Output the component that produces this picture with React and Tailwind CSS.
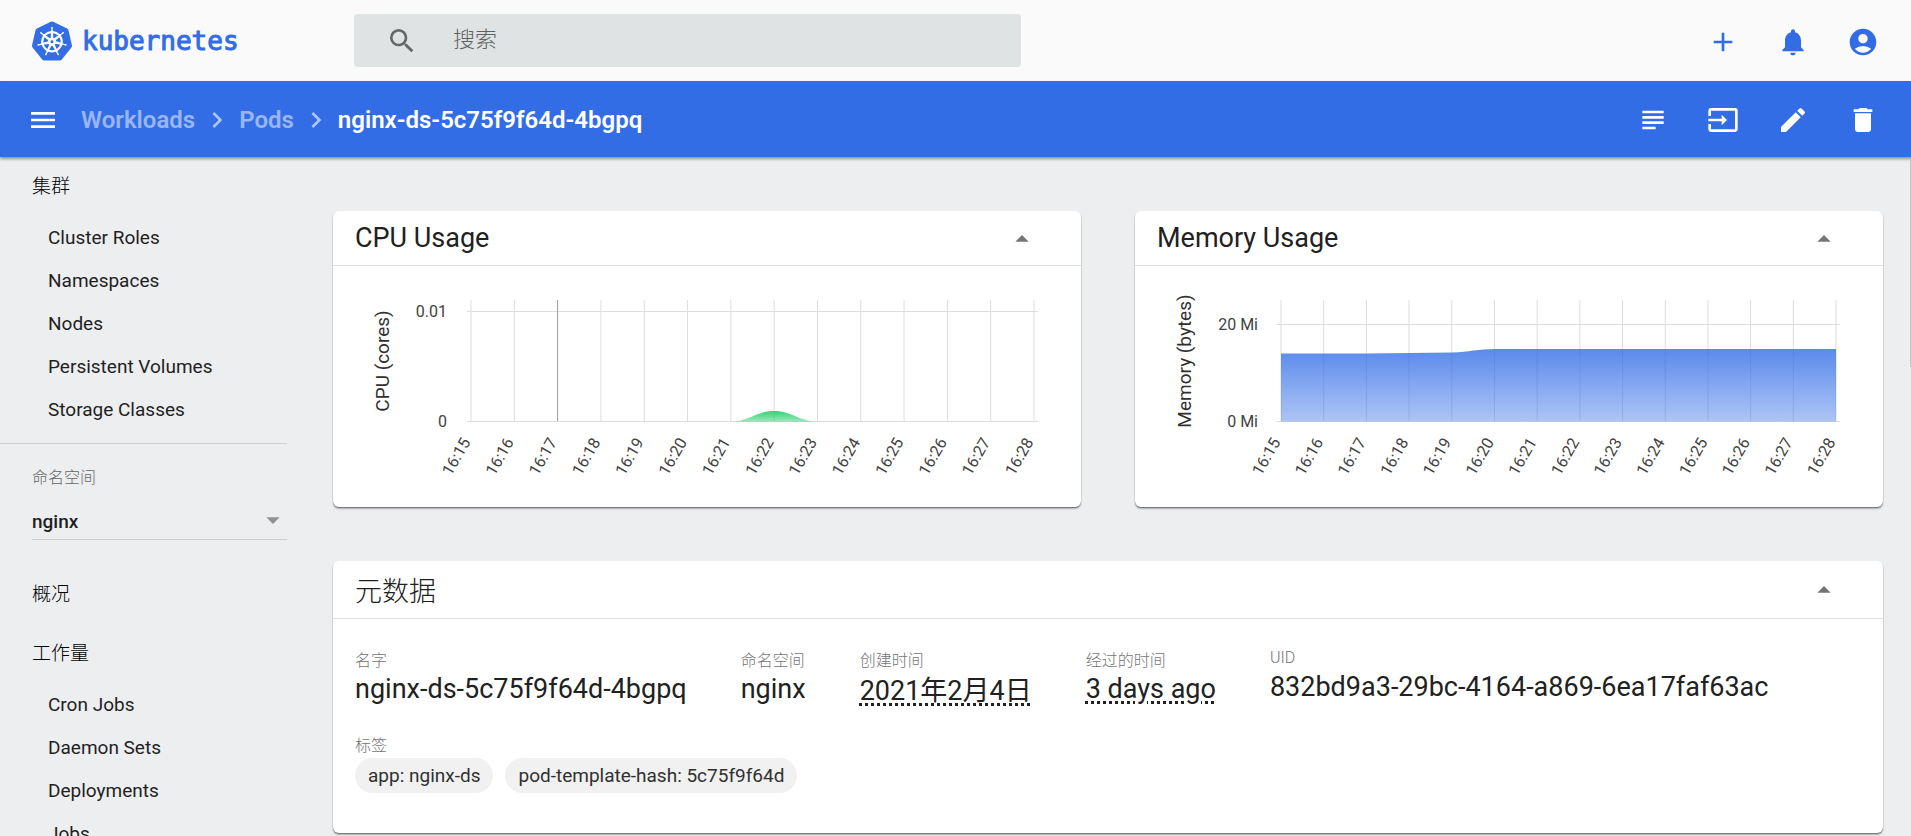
import React, { useState } from 'react';
import {
  MdAccountCircle,
  MdAdd,
  MdArrowDropDown,
  MdArrowDropUp,
  MdChevronRight,
  MdDelete,
  MdEdit,
  MdInput,
  MdMenu,
  MdNotifications,
  MdSearch,
  MdSubject,
} from 'react-icons/md';
import { SiKubernetes } from 'react-icons/si';

const TIMES = [
  '16:15', '16:16', '16:17', '16:18', '16:19', '16:20', '16:21',
  '16:22', '16:23', '16:24', '16:25', '16:26', '16:27', '16:28',
];

const CLUSTER_LINKS = ['Cluster Roles', 'Namespaces', 'Nodes', 'Persistent Volumes', 'Storage Classes'];
const WORKLOAD_LINKS = ['Cron Jobs', 'Daemon Sets', 'Deployments', 'Jobs'];

const IconButton = ({ label, icon: Icon }) => (
  <button type="button" aria-label={label} className="flex size-8 items-center justify-center">
    <Icon size={32} />
  </button>
);

const TopBar = () => (
  <header className="flex h-[81px] shrink-0 items-center bg-[#fafafa] pr-8 pl-8 text-[#326de6]">
    <a href="#/" className="flex w-[322px] shrink-0 items-center gap-2.5">
      <SiKubernetes size={40} />
      <span className="font-['DejaVu_Sans_Mono',monospace] text-[26px] leading-8 [-webkit-text-stroke:1px_#326de6]">
        kubernetes
      </span>
    </a>
    <label className="flex h-[53px] w-[667px] items-center rounded-sm bg-[#dfe3e3] pl-8 text-[#666]">
      <MdSearch size={32} />
      <input
        type="text"
        aria-label="搜索"
        placeholder="搜索"
        className="ml-[35px] min-w-0 flex-1 pb-0.5 text-[22px] font-light outline-none placeholder:text-[#5f6161]"
      />
    </label>
    <div className="ml-auto flex gap-[38px] pt-0.5">
      <IconButton label="Create" icon={MdAdd} />
      <IconButton label="Notifications" icon={MdNotifications} />
      <IconButton label="Account" icon={MdAccountCircle} />
    </div>
  </header>
);

const ActionBar = () => (
  <div className="z-10 flex h-[76px] shrink-0 items-center bg-[#326de6] pt-0.5 pr-8 pl-[27px] text-white shadow-[0_2px_3px_rgba(0,0,0,0.4)]">
    <IconButton label="Menu" icon={MdMenu} />
    <nav className="ml-[22px] flex items-center text-2xl font-semibold">
      <a href="#/workloads" className="text-white/50">Workloads</a>
      <MdChevronRight size={32} className="mx-1.5 text-white/60" />
      <a href="#/pod" className="text-white/50">Pods</a>
      <MdChevronRight size={32} className="mx-1.5 text-white/60" />
      <span>nginx-ds-5c75f9f64d-4bgpq</span>
    </nav>
    <div className="ml-auto flex gap-[38px]">
      <IconButton label="Logs" icon={MdSubject} />
      <IconButton label="Exec" icon={MdInput} />
      <IconButton label="Edit" icon={MdEdit} />
      <IconButton label="Delete" icon={MdDelete} />
    </div>
  </div>
);

const NavHeading = ({ href, children }) => (
  <a href={href} className="block h-[59px] pl-8 text-[19px] leading-[59px] font-light text-black">
    {children}
  </a>
);

const NavGroup = ({ items }) => (
  <ul>
    {items.map((item) => (
      <li key={item} className="h-[43px] pl-12 text-[19px] leading-[43px]">
        <a href="#/">{item}</a>
      </li>
    ))}
  </ul>
);

const Sidebar = () => (
  <aside className="w-[287px] shrink-0 overflow-hidden text-[#1f1f1f]">
    <NavHeading href="#/cluster">集群</NavHeading>
    <NavGroup items={CLUSTER_LINKS} />
    <div className="mt-3 border-t border-[#cfd0d2] pt-5 pl-8">
      <label htmlFor="namespace" className="block text-base leading-7 font-light text-[#666]">命名空间</label>
      <div className="relative mt-3 border-b border-[#cbccce]">
        <select
          id="namespace"
          defaultValue="nginx"
          className="block h-[35px] w-full appearance-none pt-px text-[19px] font-medium outline-none"
        >
          <option>nginx</option>
        </select>
        <MdArrowDropDown size={32} className="pointer-events-none absolute top-0 -right-0.5 text-[#919294]" />
      </div>
    </div>
    <div className="mt-[25px]">
      <NavHeading href="#/overview">概况</NavHeading>
      <NavHeading href="#/workloads">工作量</NavHeading>
    </div>
    <NavGroup items={WORKLOAD_LINKS} />
  </aside>
);

const Card = ({ title, titleClass = 'leading-[38px]', children }) => {
  const [open, setOpen] = useState(true);

  return (
    <section className="overflow-hidden rounded-md bg-white shadow-[0_2px_2px_rgba(0,0,0,0.25),0_1px_1px_rgba(0,0,0,0.35)]">
      <div className="flex items-center border-b border-[#e0e0e0] py-2 pr-[43px] pl-[22px]">
        <h2 className={`text-[27px] text-[#212121] ${titleClass}`}>{title}</h2>
        <button
          type="button"
          aria-label={`Toggle ${title}`}
          onClick={() => setOpen(!open)}
          className="ml-auto pt-px text-[#757575]"
        >
          <MdArrowDropUp size={32} />
        </button>
      </div>
      {open && children}
    </section>
  );
};

// left/right are the first and last time ticks inside the 748x241 canvas
const Chart = ({ label, left, right, ticks, area, gradientId, color, marker }) => {
  const step = (right - left) / (TIMES.length - 1);

  return (
    <svg viewBox="0 0 748 241" className="block w-full" role="img" aria-label={label}>
      <defs>
        <linearGradient id={gradientId} x1="0" y1="0" x2="0" y2="1">
          <stop offset="0" stopColor={color} stopOpacity="0.8" />
          <stop offset="1" stopColor={color} stopOpacity="0.4" />
        </linearGradient>
      </defs>

      {ticks.map((tick) => (
        <g key={tick.text}>
          <line x1={left - 4} x2={right + 4} y1={tick.y} y2={tick.y} stroke="#ddd" />
          <text x={tick.x} y={tick.y + 5} textAnchor="end" fontSize="16" fill="#424242">{tick.text}</text>
        </g>
      ))}

      {TIMES.map((time, i) => {
        const x = left + i * step;
        return (
          <g key={time}>
            <line x1={x} x2={x} y1="34" y2="155" stroke={i === marker ? '#999' : '#ddd'} />
            <text
              transform={`translate(${x} 176) rotate(-60)`}
              textAnchor="end"
              fontSize="16"
              fill="#424242"
            >
              {time}
            </text>
          </g>
        );
      })}

      <path d={area} fill={`url(#${gradientId})`} />

      <text transform="translate(56 95) rotate(-90)" textAnchor="middle" fontSize="19" fill="#303030">
        {label}
      </text>
    </svg>
  );
};

const Property = ({ label, labelClass = 'pt-1 leading-[22px]', children }) => (
  <div>
    <dt className={`text-base font-light text-[#757575] ${labelClass}`}>{label}</dt>
    <dd className="text-[27px] leading-[34px] text-[#212121]">{children}</dd>
  </div>
);

const Chip = ({ children }) => (
  <li className="h-[35px] rounded-full bg-[#f1f1f1] px-[13px] text-[19px] leading-[35px] text-[#303030]">{children}</li>
);

const Metadata = () => (
  <Card title="元数据" titleClass="pt-1.5 leading-[35px] font-light">
    <div className="px-[22px] pt-[27px] pb-10">
      <dl className="flex flex-wrap gap-x-[54px]">
        <Property label="名字">nginx-ds-5c75f9f64d-4bgpq</Property>
        <Property label="命名空间">nginx</Property>
        <Property label="创建时间">
          <span className="leading-[38px] underline decoration-dotted decoration-[3px] underline-offset-[3px]">2021年2月4日</span>
        </Property>
        <Property label="经过的时间">
          <span className="underline decoration-dotted decoration-[3px] underline-offset-[3px]">3 days ago</span>
        </Property>
        <Property label="UID" labelClass="leading-6">832bd9a3-29bc-4164-a869-6ea17faf63ac</Property>
      </dl>
      <h3 className="mt-6 text-base leading-6 font-light text-[#757575]">标签</h3>
      <ul className="flex flex-wrap gap-3">
        <Chip>app: nginx-ds</Chip>
        <Chip>pod-template-hash: 5c75f9f64d</Chip>
      </ul>
    </div>
  </Card>
);

const App = () => (
  <div className="flex h-screen flex-col overflow-hidden bg-[#edeef0] font-[Roboto,'Noto_Sans_CJK_SC',sans-serif]">
    <TopBar />
    <ActionBar />
    <div className="flex min-h-0 flex-1">
      <Sidebar />
      <main className="min-w-0 flex-1 overflow-hidden pt-[54px] pr-[27px] pl-[46px]">
        <div className="grid grid-cols-2 gap-[54px]">
          <Card title="CPU Usage">
            <Chart
              label="CPU (cores)"
              left={138}
              right={701}
              ticks={[{ y: 45.5, x: 114, text: '0.01' }, { y: 155.5, x: 114, text: '0' }]}
              area="M398 155.5 C416 155.5 423 145 441 145 S466 155.5 485 155.5 Z"
              gradientId="cpu-fill"
              color="#00c752"
              marker={2}
            />
          </Card>
          <Card title="Memory Usage">
            <Chart
              label="Memory (bytes)"
              left={146}
              right={701}
              ticks={[{ y: 58.5, x: 123, text: '20 Mi' }, { y: 155.5, x: 123, text: '0 Mi' }]}
              area="M146 87.5 H232 L317 86.5 C334 86 343 83 360 83 H701 V155.5 H146 Z"
              gradientId="memory-fill"
              color="#326de6"
            />
          </Card>
        </div>
        <div className="mt-[54px]">
          <Metadata />
        </div>
      </main>
      <div className="w-px shrink-0">
        <div className="h-[31%] bg-[#c4c5c7]" />
      </div>
    </div>
  </div>
);

export default App;
